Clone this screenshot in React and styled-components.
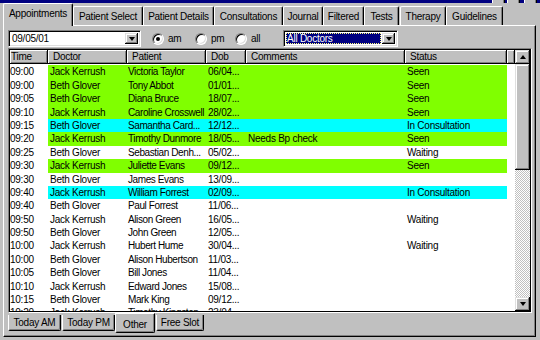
import React from 'react';
import styled, { createGlobalStyle } from 'styled-components';

const GlobalStyle = createGlobalStyle`
  html, body { margin: 0; padding: 0; background: #c0c0c0; }
  body {
    font-family: "Liberation Sans", Arial, sans-serif;
    font-size: 10px;
    letter-spacing: -0.25px;
    color: #000;
  }
  * { box-sizing: border-box; }
`;

const Window = styled.div`
  width: 540px;
  height: 340px;
  overflow: hidden;
  background: #c0c0c0;
  display: flex;
  flex-direction: column;
`;

const TitleStrip = styled.div`
  height: 3px;
  flex-shrink: 0;
  background: #000080;
  display: flex;
  justify-content: flex-end;
  gap: 2px;
  padding-right: 3px;
`;

const TitleBtn = styled.div`
  width: ${p => p.$w}px;
  margin-left: ${p => p.$gap || 0}px;
  background: #c0c0c0;
  border-right: 1px solid #000;
  box-shadow: inset -1px 0 #808080, inset 1px 0 #fff;
`;

const TabRow = styled.div`
  height: 23px;
  margin-bottom: -1px;
  flex-shrink: 0;
  display: flex;
  align-items: flex-end;
  padding-left: 3px;
  position: relative;
  z-index: 1;
`;

const Tab = styled.div`
  width: ${p => p.$w}px;
  height: ${p => (p.$active ? 23 : 19)}px;
  margin-bottom: ${p => (p.$active ? 0 : 1)}px;
  margin-right: ${p => p.$mr || 0}px;
  background: #c0c0c0;
  border-top: 1px solid #fff;
  border-left: 1px solid #fff;
  border-right: 1px solid #000;
  border-radius: 2px 2px 0 0;
  box-shadow: inset -1px 0 #808080;
  display: flex;
  align-items: center;
  justify-content: center;
  padding-bottom: ${p => (p.$active ? 3 : 0)}px;
  white-space: nowrap;
`;

const Panel = styled.div`
  flex: 1;
  margin: 0 4px 3px 3px;
  border-top: 1px solid #fff;
  border-left: 1px solid #fff;
  border-right: 1px solid #000;
  border-bottom: 1px solid #000;
  box-shadow: inset -1px -1px #808080;
  padding: 4px 2px 0 4px;
  display: flex;
  flex-direction: column;
`;

const Toolbar = styled.div`
  height: 17px;
  display: flex;
  align-items: center;
  flex-shrink: 0;
`;

const Combo = styled.div`
  width: ${p => p.$w}px;
  height: 17px;
  margin-left: ${p => p.$ml || 0}px;
  background: #fff;
  border-top: 1px solid #808080;
  border-left: 1px solid #808080;
  border-right: 1px solid #fff;
  border-bottom: 1px solid #fff;
  box-shadow: inset 1px 1px #000, inset -1px -1px #dfdfdf;
  display: flex;
  align-items: stretch;
  padding: 2px;
`;

const ComboText = styled.div`
  flex: 1;
  display: flex;
  align-items: center;
  padding-left: 1px;
  color: ${p => (p.$selected ? '#fff' : '#000')};
  background: ${p => (p.$selected ? '#000080' : 'transparent')};
  outline: ${p => (p.$selected ? '1px dotted #ffff80' : 'none')};
  outline-offset: -1px;
  margin-right: 1px;
`;

const DropButton = styled.div`
  width: 13px;
  background: #c0c0c0;
  box-shadow: inset -1px -1px #000, inset 1px 1px #dfdfdf, inset -2px -2px #808080, inset 2px 2px #fff;
  display: flex;
  align-items: center;
  justify-content: center;
`;

const Arrow = styled.span`
  width: 0;
  height: 0;
  border-left: 3.5px solid transparent;
  border-right: 3.5px solid transparent;
  border-${p => (p.$up ? 'bottom' : 'top')}: 4px solid #000;
`;

const RadioGroup = styled.div`
  display: flex;
  align-items: center;
  margin-left: 11px;
`;

const RadioItem = styled.label`
  display: flex;
  align-items: center;
  width: ${p => p.$w}px;
`;

const RadioCircle = styled.span`
  width: 12px;
  height: 12px;
  border-radius: 50%;
  background: #fff;
  border: 1px solid;
  border-color: #808080 #fff #fff #808080;
  box-shadow: inset 1px 1px #000, inset -1px -1px #dfdfdf;
  margin-right: 4px;
  display: flex;
  align-items: center;
  justify-content: center;
  &::after {
    content: '';
    width: 4px;
    height: 4px;
    border-radius: 50%;
    background: ${p => (p.$checked ? '#000' : 'transparent')};
  }
`;

const ListView = styled.div`
  margin-top: 1px;
  width: 524px;
  height: 265px;
  flex-shrink: 0;
  border-top: 1px solid #808080;
  border-left: 1px solid #808080;
  border-right: 1px solid #fff;
  border-bottom: 1px solid #fff;
  box-shadow: inset 1px 1px #000, inset -1px -1px #000;
  padding: 1px;
  display: flex;
  background: #fff;
`;

const ListMain = styled.div`
  width: 505px;
  display: flex;
  flex-direction: column;
  overflow: hidden;
`;

const HeaderRow = styled.div`
  display: flex;
  height: 14px;
  flex-shrink: 0;
`;

const HeaderCell = styled.div`
  width: ${p => p.$w}px;
  flex-shrink: 0;
  background: #c0c0c0;
  border-right: 1px solid #000;
  border-bottom: 1px solid #000;
  box-shadow: inset 1px 1px #fff, inset -1px -1px #808080;
  padding-left: ${p => p.$pl ?? 5}px;
  line-height: 13px;
  white-space: nowrap;
  overflow: hidden;
`;

const Rows = styled.div`
  padding-top: 1.4px;
  flex: 1;
  overflow: hidden;
`;

const Row = styled.div`
  display: grid;
  grid-template-columns: 38px 79px 79px 40px 159px 102px;
  width: 497px;
  height: 13.4px;
  line-height: 13.4px;
  background: ${p => p.$bg || '#fff'};
`;

const Cell = styled.div`
  padding-left: ${p => p.$pl ?? 2}px;
  letter-spacing: ${p => (p.$tight ? '-0.4px' : 'inherit')};
  white-space: nowrap;
  overflow: hidden;
  background: ${p => (p.$plain ? '#fff' : 'transparent')};
`;

const ScrollBar = styled.div`
  width: 15px;
  display: flex;
  flex-direction: column;
  background: repeating-conic-gradient(#c0c0c0 0 25%, #fff 0 50%) 0 0 / 2px 2px;
`;

const ScrollButton = styled.div`
  height: 14px;
  flex-shrink: 0;
  background: #c0c0c0;
  box-shadow: inset -1px -1px #000, inset 1px 1px #dfdfdf, inset -2px -2px #808080, inset 2px 2px #fff;
  display: flex;
  align-items: center;
  justify-content: center;
`;

const Thumb = styled.div`
  height: ${p => p.$h}px;
  flex-shrink: 0;
  background: #c0c0c0;
  box-shadow: inset -1px -1px #000, inset 1px 1px #dfdfdf, inset -2px -2px #808080, inset 2px 2px #fff;
`;

const Track = styled.div`
  flex: 1;
`;

const BottomTabs = styled.div`
  height: 20px;
  display: flex;
  align-items: flex-start;
`;

const BottomTab = styled.div`
  width: ${p => p.$w}px;
  margin-left: ${p => p.$ml || 0}px;
  height: ${p => (p.$active ? 20 : 16)}px;
  margin-top: ${p => (p.$active ? 0 : 2)}px;
  background: #c0c0c0;
  border-left: 1px solid #fff;
  border-right: 1px solid #000;
  border-bottom: 1px solid #000;
  border-top: ${p => (p.$active ? '1px solid #fff' : 'none')};
  border-radius: 0 0 2px 2px;
  box-shadow: inset -1px -1px #808080;
  display: flex;
  align-items: center;
  justify-content: center;
  padding-top: ${p => (p.$active ? 3 : 0)}px;
  white-space: nowrap;
`;

const tabs = [
  ['Appointments', 70],
  ['Patient Select', 70],
  ['Patient Details', 71],
  ['Consultations', 69],
  ['Journal', 40],
  ['Filtered', 41],
  ['Tests', 35, 1],
  ['Therapy', 46],
  ['Guidelines', 57],
];

const G = '#80ff00';
const C = '#00ffff';

const rows = [
  ['09:00', 'Jack Kerrush', 'Victoria Taylor', '06/04...', '', 'Seen', G],
  ['09:00', 'Beth Glover', 'Tony Abbot', '01/01...', '', 'Seen', G],
  ['09:05', 'Beth Glover', 'Diana Bruce', '18/07...', '', 'Seen', G],
  ['09:10', 'Jack Kerrush', 'Caroline Crosswell', '28/02...', '', 'Seen', G],
  ['09:15', 'Beth Glover', 'Samantha Card...', '12/12...', '', 'In Consultation', C],
  ['09:20', 'Jack Kerrush', 'Timothy Dunmore', '18/05...', 'Needs Bp check', 'Seen', G],
  ['09:25', 'Beth Glover', 'Sebastian Denh...', '05/02...', '', 'Waiting'],
  ['09:30', 'Jack Kerrush', 'Juliette Evans', '09/12...', '', 'Seen', G],
  ['09:30', 'Beth Glover', 'James Evans', '13/09...', '', ''],
  ['09:40', 'Jack Kerrush', 'William Forrest', '02/09...', '', 'In Consultation', C],
  ['09:40', 'Beth Glover', 'Paul Forrest', '11/06...', '', ''],
  ['09:50', 'Jack Kerrush', 'Alison Green', '16/05...', '', 'Waiting'],
  ['09:50', 'Beth Glover', 'John Green', '12/05...', '', ''],
  ['10:00', 'Jack Kerrush', 'Hubert Hume', '30/04...', '', 'Waiting'],
  ['10:00', 'Beth Glover', 'Alison Hubertson', '11/03...', '', ''],
  ['10:05', 'Beth Glover', 'Bill Jones', '11/04...', '', ''],
  ['10:10', 'Jack Kerrush', 'Edward Jones', '15/08...', '', ''],
  ['10:15', 'Beth Glover', 'Mark King', '09/12...', '', ''],
  ['10:20', 'Jack Kerrush', 'Timothy Kingston', '23/04...', '', ''],
];

const headers = [
  ['Time', 38, 1],
  ['Doctor', 79],
  ['Patient', 79],
  ['Dob', 40],
  ['Comments', 159],
  ['Status', 102],
  ['', 8],
];

export default function App() {
  return (
    <>
      <GlobalStyle />
      <Window>
        <TitleStrip>
          <TitleBtn $w={13} />
          <TitleBtn $w={13} />
          <TitleBtn $w={13} $gap={2} />
        </TitleStrip>
        <TabRow>
          {tabs.map(([label, w, mr], i) => (
            <Tab key={label} $w={w} $mr={mr} $active={i === 0}>
              {label}
            </Tab>
          ))}
        </TabRow>
        <Panel>
          <Toolbar>
            <Combo $w={133}>
              <ComboText>09/05/01</ComboText>
              <DropButton>
                <Arrow />
              </DropButton>
            </Combo>
            <RadioGroup>
              <RadioItem $w={43}>
                <RadioCircle $checked />
                am
              </RadioItem>
              <RadioItem $w={40}>
                <RadioCircle />
                pm
              </RadioItem>
              <RadioItem $w={48}>
                <RadioCircle />
                all
              </RadioItem>
            </RadioGroup>
            <Combo $w={115}>
              <ComboText $selected>All Doctors</ComboText>
              <DropButton>
                <Arrow />
              </DropButton>
            </Combo>
          </Toolbar>
          <ListView>
            <ListMain>
              <HeaderRow>
                {headers.map(([label, w, pl], i) => (
                  <HeaderCell key={i} $w={w} $pl={pl}>
                    {label}
                  </HeaderCell>
                ))}
              </HeaderRow>
              <Rows>
                {rows.map((r, i) => (
                  <Row key={i} $bg={r[6]}>
                    <Cell $plain $pl={0}>{r[0]}</Cell>
                    <Cell>{r[1]}</Cell>
                    <Cell $tight $pl={1}>{r[2]}</Cell>
                    <Cell>{r[3]}</Cell>
                    <Cell>{r[4]}</Cell>
                    <Cell>{r[5]}</Cell>
                  </Row>
                ))}
              </Rows>
            </ListMain>
            <ScrollBar>
              <ScrollButton>
                <Arrow $up />
              </ScrollButton>
              <Thumb $h={106} />
              <Track />
              <ScrollButton>
                <Arrow />
              </ScrollButton>
            </ScrollBar>
          </ListView>
          <BottomTabs>
            <BottomTab $w={53}>Today AM</BottomTab>
            <BottomTab $w={53} $ml={1}>Today PM</BottomTab>
            <BottomTab $w={40} $active>Other</BottomTab>
            <BottomTab $w={48} $ml={1}>Free Slot</BottomTab>
          </BottomTabs>
        </Panel>
      </Window>
    </>
  );
}
